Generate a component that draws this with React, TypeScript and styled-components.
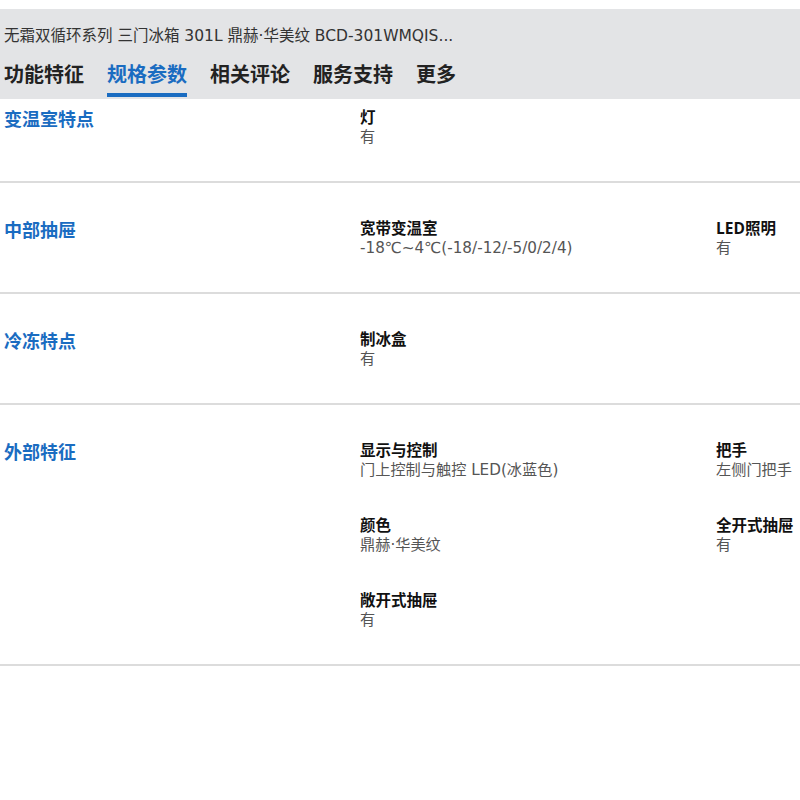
import React from "react";
import styled, { createGlobalStyle } from "styled-components";

type SpecItem = { label: string; value: string };
type SpecGroup = { title: string; items: SpecItem[] };

const tabs = ["功能特征", "规格参数", "相关评论", "服务支持", "更多"];

const groups: SpecGroup[] = [
  { title: "变温室特点", items: [{ label: "灯", value: "有" }] },
  {
    title: "中部抽屉",
    items: [
      { label: "宽带变温室", value: "-18℃~4℃(-18/-12/-5/0/2/4)" },
      { label: "LED照明", value: "有" },
    ],
  },
  { title: "冷冻特点", items: [{ label: "制冰盒", value: "有" }] },
  {
    title: "外部特征",
    items: [
      { label: "显示与控制", value: "门上控制与触控 LED(冰蓝色)" },
      { label: "把手", value: "左侧门把手" },
      { label: "颜色", value: "鼎赫·华美纹" },
      { label: "全开式抽屉", value: "有" },
      { label: "敞开式抽屉", value: "有" },
    ],
  },
];

const GlobalStyle = createGlobalStyle`
  body {
    margin: 0;
    background: #fff;
    font-family: "Open Sans", "Noto Sans CJK SC", sans-serif;
  }
`;

const Page = styled.div`
  width: 800px;
  padding-top: 9px;
`;

const Header = styled.div`
  background: #e3e4e6;
  height: 90px;
  padding: 0 4px;
  box-sizing: border-box;
  display: flex;
  flex-direction: column;
`;

const ProductName = styled.div`
  font-family: "DejaVu Sans", "Noto Sans CJK SC", sans-serif;
  font-size: 15.5px;
  line-height: 20px;
  color: #333;
  margin-top: 17px;
  white-space: nowrap;
`;

const TabBar = styled.div`
  display: flex;
  gap: 23px;
  margin-top: 18px;
`;

const Tab = styled.div<{ $active?: boolean }>`
  font-size: 20px;
  font-weight: 700;
  line-height: 22px;
  color: ${(p) => (p.$active ? "#1a6cc1" : "#222")};
  padding-bottom: 7px;
  border-bottom: 4px solid ${(p) => (p.$active ? "#1a6cc1" : "transparent")};
`;

const Section = styled.div<{ $first?: boolean }>`
  display: grid;
  grid-template-columns: 356px 356px 1fr;
  padding: ${(p) => (p.$first ? "8px" : "35px")} 0 34px 4px;
  border-bottom: 2px solid #dcdcdc;
`;

const GroupTitle = styled.div`
  grid-column: 1;
  grid-row: 1 / span 3;
  font-size: 18px;
  font-weight: 700;
  line-height: 24px;
  color: #1a6cc1;
`;

const Items = styled.div`
  grid-column: 2 / span 2;
  display: grid;
  grid-template-columns: 356px 1fr;
  row-gap: 35px;
`;

const Item = styled.div`
  display: flex;
  flex-direction: column;
`;

const Label = styled.div`
  font-size: 15.5px;
  font-weight: 700;
  line-height: 20px;
  color: #111;
  white-space: nowrap;
`;

const Value = styled.div`
  font-family: "DejaVu Sans", "Noto Sans CJK SC", sans-serif;
  font-size: 15.2px;
  line-height: 20px;
  color: #555;
  white-space: nowrap;
`;

export default function App() {
  return (
    <Page>
      <GlobalStyle />
      <Header>
        <ProductName>
          无霜双循环系列 三门冰箱 301L 鼎赫·华美纹 BCD-301WMQIS...
        </ProductName>
        <TabBar>
          {tabs.map((t) => (
            <Tab key={t} $active={t === "规格参数"}>
              {t}
            </Tab>
          ))}
        </TabBar>
      </Header>
      {groups.map((g, i) => (
        <Section key={g.title} $first={i === 0}>
          <GroupTitle>{g.title}</GroupTitle>
          <Items>
            {g.items.map((it) => (
              <Item key={it.label}>
                <Label>{it.label}</Label>
                <Value>{it.value}</Value>
              </Item>
            ))}
          </Items>
        </Section>
      ))}
    </Page>
  );
}
